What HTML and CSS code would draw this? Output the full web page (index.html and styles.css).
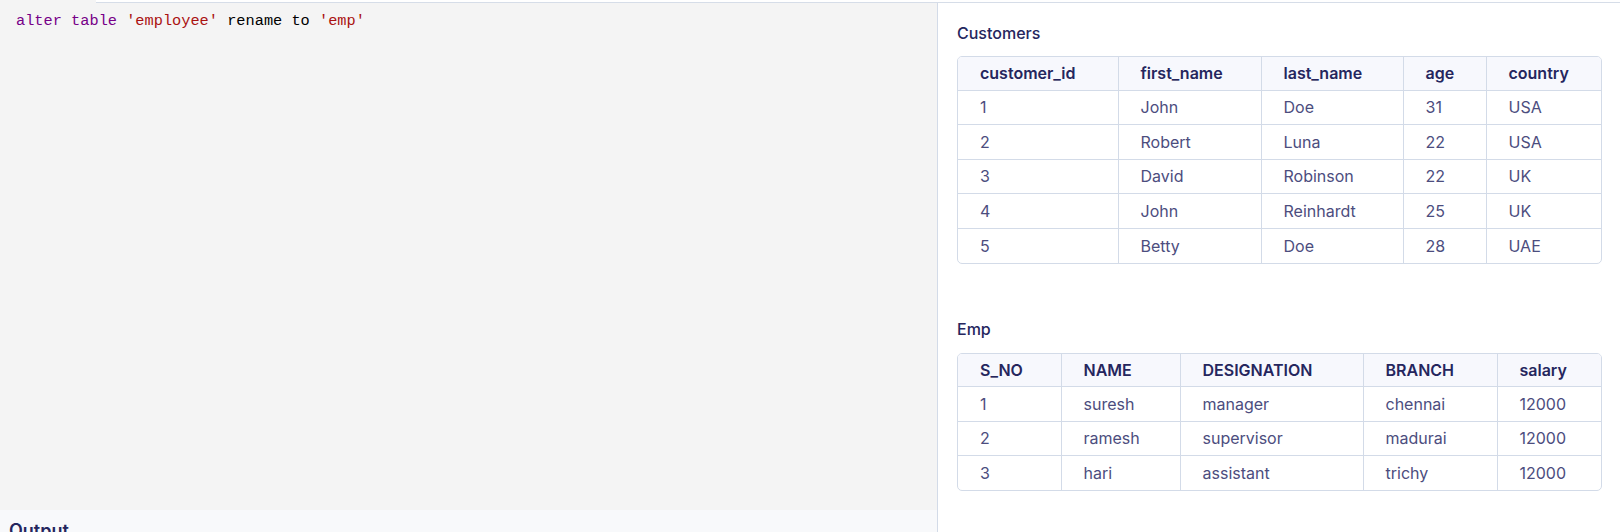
FILE: index.html
```html
<!DOCTYPE html>
<html>
<head>
<meta charset="utf-8">
<link rel="stylesheet" href="styles.css">
</head>
<body>
<div class="page">
  <div class="topstrip"><div class="ts-left"></div><div class="ts-right"></div></div>
  <div class="main">
    <div class="left">
      <div class="editor">
        <div class="code-line"><span class="kw">alter</span> <span class="kw">table</span> <span class="str">'employee'</span> rename to <span class="str">'emp'</span></div>
      </div>
      <div class="output">
        <div class="output-title">Output</div>
      </div>
    </div>
    <div class="right">
      <div class="tbl-block">
        <div class="tbl-title">Customers</div>
        <div class="tbl-wrap">
          <table class="tbl">
            <colgroup>
              <col class="c1a"><col class="c1b"><col class="c1c"><col class="c1d"><col class="c1e">
            </colgroup>
            <thead>
              <tr><th>customer_id</th><th>first_name</th><th>last_name</th><th>age</th><th>country</th></tr>
            </thead>
            <tbody>
              <tr><td>1</td><td>John</td><td>Doe</td><td>31</td><td>USA</td></tr>
              <tr><td>2</td><td>Robert</td><td>Luna</td><td>22</td><td>USA</td></tr>
              <tr><td>3</td><td>David</td><td>Robinson</td><td>22</td><td>UK</td></tr>
              <tr><td>4</td><td>John</td><td>Reinhardt</td><td>25</td><td>UK</td></tr>
              <tr><td>5</td><td>Betty</td><td>Doe</td><td>28</td><td>UAE</td></tr>
            </tbody>
          </table>
        </div>
      </div>
      <div class="tbl-block second">
        <div class="tbl-title">Emp</div>
        <div class="tbl-wrap">
          <table class="tbl">
            <colgroup>
              <col class="c2a"><col class="c2b"><col class="c2c"><col class="c2d"><col class="c2e">
            </colgroup>
            <thead>
              <tr><th>S_NO</th><th>NAME</th><th>DESIGNATION</th><th>BRANCH</th><th>salary</th></tr>
            </thead>
            <tbody>
              <tr><td>1</td><td>suresh</td><td>manager</td><td>chennai</td><td>12000</td></tr>
              <tr><td>2</td><td>ramesh</td><td>supervisor</td><td>madurai</td><td>12000</td></tr>
              <tr><td>3</td><td>hari</td><td>assistant</td><td>trichy</td><td>12000</td></tr>
            </tbody>
          </table>
        </div>
      </div>
    </div>
  </div>
</div>
</body>
</html>
```

FILE: styles.css
```css
* { box-sizing: border-box; }
html, body { margin: 0; padding: 0; }
body {
  width: 1620px;
  height: 532px;
  overflow: hidden;
  background: #ffffff;
  font-family: Inter, "Noto Sans", sans-serif;
}
.page { display: flex; flex-direction: column; height: 532px; }
.topstrip { display: flex; height: 3px; flex: none; }
.ts-left { width: 96px; background: #f4f4f4; }
.ts-right { flex: 1; background: #ffffff; border-bottom: 1px solid #d6dde8; }
.main { display: flex; flex: 1; min-height: 0; }
.left { width: 937px; flex: none; display: flex; flex-direction: column; }
.editor {
  height: 507px;
  flex: none;
  background: #f4f4f4;
  padding: 8px 0 0 16px;
}
.code-line {
  font-family: "Liberation Mono", "DejaVu Sans Mono", monospace;
  font-size: 15.3px;
  line-height: 20px;
  color: #000000;
  white-space: pre;
}
.kw { color: #770088; }
.str { color: #aa1111; }
.output { flex: 1; background: #f8f9fb; padding: 9px 0 0 9px; }
.output-title {
  font-size: 18px;
  font-weight: 600;
  color: #25265e;
  line-height: 24px;
}
.right {
  flex: 1;
  border-left: 1px solid #d3dbe8;
  padding: 18px 18px 0 19px;
}
.tbl-title {
  font-size: 16px;
  font-weight: 500;
  color: #25265e;
  line-height: 24px;
  margin-bottom: 11px;
}
.tbl-block.second { margin-top: 53px; }
.tbl-block.second .tbl-title { margin-bottom: 12px; }
.tbl-wrap {
  border: 1px solid #d3dbe8;
  border-radius: 5px;
  overflow: hidden;
  width: 645px;
}
.tbl {
  width: 100%;
  border-collapse: collapse;
  table-layout: fixed;
}
.tbl th, .tbl td {
  text-align: left;
  padding: 0 0 0 22px;
  height: 34.5px;
  font-size: 16px;
  white-space: nowrap;
  border-left: 1px solid #d3dbe8;
  border-top: 1px solid #d3dbe8;
}
.tbl th:first-child, .tbl td:first-child { border-left: none; }
.tbl thead th { border-top: none; }
.tbl th {
  background: #f7f8fd;
  color: #25265e;
  font-weight: 600;
  height: 33px;
}
.tbl td { color: #4c4d7e; font-weight: 400; }
.c1a { width: 160px; }
.c1b { width: 143px; }
.c1c { width: 142px; }
.c1d { width: 83px; }
.c1e { width: 117px; }
.c2a { width: 103px; }
.c2b { width: 119px; }
.c2c { width: 183px; }
.c2d { width: 134px; }
.c2e { width: 106px; }
```
